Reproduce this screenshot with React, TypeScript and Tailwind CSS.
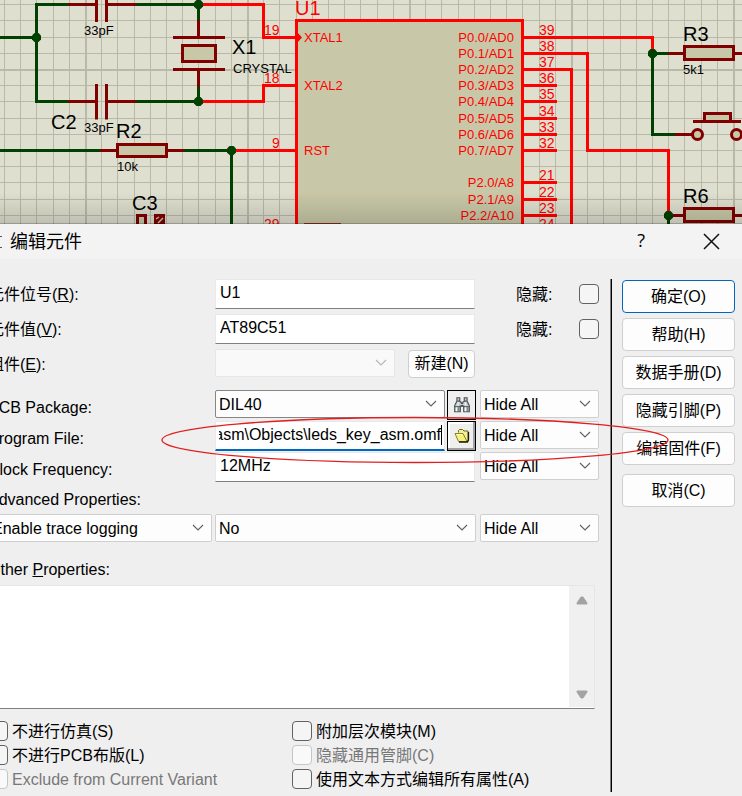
import type { ReactNode } from "react";

const GREEN = "#004000";
const MAROON = "#800000";
const RED = "#ff0000";
const FILL = "#c8c8a8";

const gridX = Array.from({ length: 124 }, (_, k) => ({ at: Math.round(4 + 16.2 * k), bold: k % 10 === 5 }));
const gridY = [4, 20, 37, 53, 69, 85, 101, 118, 134, 150, 166, 182, 199, 215];

function Wire({ d, color = RED }: { d: string; color?: string }) {
  return <path d={d} stroke={color} strokeWidth="3" fill="none" />;
}

function Dot({ x, y }: { x: number; y: number }) {
  return <path d={`M${x - 2} ${y - 4.5}h4l2.5 2.5v4l-2.5 2.5h-4l-2.5 -2.5v-4z`} fill={GREEN} />;
}

function Box({ x, y, w, h }: { x: number; y: number; w: number; h: number }) {
  return (
    <rect x={x + 1.5} y={y + 1.5} width={w - 3} height={h - 3} fill={FILL} stroke={MAROON} strokeWidth="3" />
  );
}

const portPins: [string, string, number][] = [
  ["P0.0/AD0", "39", 37],
  ["P0.1/AD1", "38", 53],
  ["P0.2/AD2", "37", 69],
  ["P0.3/AD3", "36", 85],
  ["P0.4/AD4", "35", 101],
  ["P0.5/AD5", "34", 118],
  ["P0.6/AD6", "33", 134],
  ["P0.7/AD7", "32", 150],
  ["P2.0/A8", "21", 182],
  ["P2.1/A9", "22", 199],
  ["P2.2/A10", "23", 215],
];

function Schematic() {
  return (
    <svg className="block h-[224px] w-full bg-[#dfdfcf]" role="img" aria-label="Schematic">
      <defs>
        <linearGradient id="shade" x1="0" y1="0" x2="0" y2="1">
          <stop offset="0" stopColor="#000" stopOpacity="0" />
          <stop offset="1" stopColor="#000" stopOpacity="0.14" />
        </linearGradient>
      </defs>
      <g fill="#b9b9aa">
        {gridX.map((g) => (
          <rect key={g.at} x={g.at} y="0" width={g.bold ? 2 : 1} height="224" />
        ))}
        {gridY.map((y) => (
          <rect key={y} x="0" y={y} width="2000" height={y === 69 ? 2 : 1} />
        ))}
      </g>

      <rect x="296.5" y="20.5" width="226" height="230" fill={FILL} stroke={RED} strokeWidth="3" />

      <Wire color={GREEN} d="M0 37.5H36.5M68 4.5H36.5V101.5H68M136 4.5H198.5V20M136 101.5H198.5V87M0 150.5H100M184 150.5H231.5V224" />
      <Wire color={MAROON} d="M68 4.5H96.5M106.5 4.5H136M96.5 0V22M106.5 0V22M68 101.5H96.5M106.5 101.5H136M96.5 84V119.5M106.5 84V119.5" />
      <Wire color={MAROON} d="M198.5 20V37.5M173 37.5H225M173 69.5H225M198.5 69.5V87M100 150.5H117M168 150.5H184" />
      <Box x={181} y={44} w={36} h={19} />
      <Box x={116} y={143} w={52} h={15} />
      <Box x={136} y={214} w={11} h={20} />
      <rect x="154" y="214" width="11" height="12" fill={MAROON} />
      <path d="M156 219l3 -2M158 223l5 -5" stroke={FILL} strokeWidth="1.5" />

      <Wire d="M199 4.5H263.5V37.5H297M199 101.5H263.5V85.5H297M232 150.5H297" />
      <path d="M297 32l5 5.500l-5 5.500z" fill={RED} />
      <Wire d="M524 37.5H652.5V53M524 53.5H587.5V150.5H668.5V215M524 69.5H571.5V224" />
      <Wire d="M524 85.5H557M524 101.5H557M524 118.5H557M524 134.5H557M524 150.5H557M524 182.5H557M524 199.5H557M524 215.5H557" />

      <Wire color={GREEN} d="M668 53.5H652.5V134.5H675M668.5 215V224" />
      <Wire color={MAROON} d="M668 53.5H684M735 53.5H2000M675 134.5H692M693 121.5H741M673 215.5H684M735 215.5H2000" />
      <Box x={683} y={45} w={52} h={16} />
      <Box x={683} y={207} w={52} h={16} />
      <Box x={703} y={112} w={29} h={11} />
      <circle cx="697.5" cy="134.5" r="5" fill={FILL} stroke={MAROON} strokeWidth="3" />
      <circle cx="736.5" cy="134.5" r="5" fill={FILL} stroke={MAROON} strokeWidth="3" />

      <Dot x={36.5} y={37.5} />
      <Dot x={198.5} y={4.5} />
      <Dot x={198.5} y={101.5} />
      <Dot x={231.5} y={150.5} />
      <Dot x={652.5} y={53.5} />
      <Dot x={668.5} y={215.5} />

      <g className="text-[20px]">
        <text x="51" y="129">C2</text>
        <text x="116" y="138">R2</text>
        <text x="132" y="210">C3</text>
        <text x="232" y="54">X1</text>
        <text x="683" y="41">R3</text>
        <text x="683" y="203">R6</text>
        <text x="295" y="15" fill={RED}>U1</text>
      </g>
      <g className="text-[13px]">
        <text x="84" y="35">33pF</text>
        <text x="84" y="132">33pF</text>
        <text x="117" y="171">10k</text>
        <text x="233" y="73">CRYSTAL</text>
        <text x="683" y="74">5k1</text>
      </g>
      <g className="text-[13px]" fill={RED}>
        <text x="304" y="42">XTAL1</text>
        <text x="304" y="90">XTAL2</text>
        <text x="304" y="155">RST</text>
        {portPins.map(([name, , y]) => (
          <text key={name} x="514" y={y + 5} textAnchor="end">{name}</text>
        ))}
      </g>
      <g className="text-[14px]" fill={RED}>
        <text x="264" y="35">19</text>
        <text x="264" y="83">18</text>
        <text x="272" y="148">9</text>
        <text x="264" y="229">29</text>
        <text x="539" y="229">24</text>
        {portPins.map(([, no, y]) => (
          <text key={no} x="539" y={y - 2}>{no}</text>
        ))}
      </g>
      <rect x="304" y="223" width="37" height="1" fill="#a03020" />
      <rect x="0" y="192" width="100%" height="32" fill="url(#shade)" />
      <rect x="0" y="223" width="100%" height="1" fill="#000" opacity="0.2" />
    </svg>
  );
}

function Chevron({ className }: { className: string }) {
  return (
    <svg viewBox="0 0 12 8" className={`pointer-events-none absolute right-2 top-1/2 -mt-1 h-2 w-3 ${className}`} aria-hidden="true">
      <path d="M1 1l5 5l5 -5" fill="none" stroke="currentColor" strokeWidth="1.100" />
    </svg>
  );
}

function Combo({ label, value, className = "", pad = "pl-[3px]", strong = false, disabled = false }: {
  label: string; value: string; className?: string; pad?: string; strong?: boolean; disabled?: boolean;
}) {
  const look = disabled
    ? "border-[#e6e6e6] bg-[#f9f9f9]"
    : strong
      ? "border-[#868686] bg-[#fdfdfd]"
      : "border-[#cfcfcf] bg-[#fdfdfd]";
  return (
    <div className={`relative h-7 ${className}`}>
      <select aria-label={label} disabled={disabled} className={`block h-7 w-full appearance-none rounded-[2px] border pt-[2px] text-[16px] text-black outline-none ${pad} ${look}`}>
        <option>{value}</option>
      </select>
      <Chevron className={disabled ? "text-[#b5b5b5]" : "text-[#606060]"} />
    </div>
  );
}

const fieldClass =
  "block w-full border border-[#e8e8e8] border-b-[#808080] bg-white px-1 pb-[2px] text-[16px] outline-none";

function Row({ label, htmlFor, low = false, children, side }: {
  label: ReactNode; htmlFor?: string; low?: boolean; children: ReactNode; side?: ReactNode;
}) {
  return (
    <div className="grid grid-cols-[222px_minmax(0,1fr)_119px] gap-x-[5px]">
      <label htmlFor={htmlFor} className={`leading-6 ${low ? "pt-[6px]" : "pt-1"}`}>{label}</label>
      {children}
      {side}
    </div>
  );
}

function HideTick({ id }: { id: string }) {
  return (
    <div className="flex items-center justify-between pl-9">
      <label htmlFor={id} className="pt-[2px]">隐藏:</label>
      <TickBox id={id} />
    </div>
  );
}

function TickBox({ id, disabled = false }: { id: string; disabled?: boolean }) {
  return (
    <input
      id={id}
      type="checkbox"
      disabled={disabled}
      className="block size-5 shrink-0 appearance-none rounded-[4px] border border-[#626262] bg-[#f5f5f5] disabled:border-[#c6c6c6] disabled:bg-[#f9f9f9]"
    />
  );
}

function Tick({ id, label, disabled = false }: { id: string; label: string; disabled?: boolean }) {
  return (
    <div className="flex h-5 items-center gap-1">
      <TickBox id={id} disabled={disabled} />
      <label htmlFor={id} className={`pt-[2px] leading-5 whitespace-nowrap ${disabled ? "text-[#787878]" : ""}`}>{label}</label>
    </div>
  );
}

const actionClass =
  "h-[33px] w-full rounded-[4px] border bg-[#fdfdfd] text-[16px] leading-none";

function BinocularsIcon() {
  return (
    <svg viewBox="0 0 16 16" className="size-[18px]" aria-hidden="true">
      <path d="M3.500 1.500h2.500v3l1 1h2l1 -1v-3h2.500v3l2 4v5.500h-5v-5h-3v5h-5v-5.500l2 -4z" fill="#c4ced2" stroke="#4a4f52" />
      <path d="M1.500 9.500h5M9.500 9.500h5M4 4.500h2M10 4.500h2" stroke="#4a4f52" />
      <path d="M7 6.500h2M7 8.500h2" stroke="#4a4f52" />
      <path d="M3 10v3.500M11 10v3.500M4.500 5.500v3M11 5.500v3" stroke="#f4f8fa" />
      <path d="M5 10v3.500M13 10v3.500" stroke="#7a8589" strokeWidth="1.500" />
    </svg>
  );
}

function FolderIcon() {
  return (
    <svg viewBox="0 0 16 14" className="h-[14px] w-4" aria-hidden="true">
      <path d="M4.500 3.500v-2l1 -1h3l1.500 1.500h4v8.500l-1.500 2" fill="#f4ee9a" stroke="#6b6414" />
      <path d="M1 4.500h8l4 8h-8.500z" fill="#f7f07a" stroke="#8b8320" />
      <path d="M2.500 5.500h6" stroke="#fffde0" />
      <path d="M5 13h8.500l1 -2v-8" fill="none" stroke="#1e1c04" strokeWidth="1.300" />
    </svg>
  );
}

export default function App() {
  return (
    <div className="relative min-h-screen overflow-hidden bg-[#efefef] font-['Liberation_Sans','Noto_Sans_CJK_SC',sans-serif] text-[16px] text-black">
      <Schematic />
      <section aria-label="编辑元件" className="relative -ml-3">
        <header className="flex h-[35px] items-center bg-[#f3f3f3] pr-[22px]">
          <span className="mr-2 h-3 w-[14px] border-y border-r-0 border-[#555]" />
          <h1 className="flex-1 text-[18px] leading-6">编辑元件</h1>
          <button type="button" aria-label="Help" className="mr-[58px] pb-1 font-['Open_Sans',sans-serif] text-[18px] leading-6">?</button>
          <button type="button" aria-label="Close">
            <svg viewBox="0 0 17 17" className="block size-[17px]" aria-hidden="true">
              <path d="M1 1l15 15M16 1l-15 15" stroke="#111" strokeWidth="1.500" />
            </svg>
          </button>
        </header>

        <div className="flex pt-5 pb-1 pr-[7px]">
          <form className="min-w-0 flex-1 pb-[3px]">
            <div className="flex flex-col gap-[5px]">
              <Row htmlFor="ref" label={<>元件位号(<u>R</u>):</>} side={<HideTick id="hide-ref" />}>
                <input id="ref" defaultValue="U1" className={`h-[30px] ${fieldClass}`} />
              </Row>
              <Row htmlFor="val" label={<>元件值(<u>V</u>):</>} side={<HideTick id="hide-val" />}>
                <input id="val" defaultValue="AT89C51" className={`h-[30px] ${fieldClass}`} />
              </Row>
              <Row label={<>组件(<u>E</u>):</>}>
                <div className="flex justify-between gap-[13px]">
                  <Combo label="组件" value="" disabled className="flex-1" />
                  <button type="button" className="mt-px h-7 w-[67px] rounded-[4px] border border-[#cfcfcf] bg-[#fdfdfd] leading-none">新建(N)</button>
                </div>
              </Row>
            </div>

            <div className="mt-3 flex flex-col gap-px">
              <Row low label="PCB Package:" side={<Combo label="PCB Package visibility" value="Hide All" />}>
                <div className="-mr-px flex gap-[2px]">
                  <Combo label="PCB Package" value="DIL40" strong className="flex-1" />
                  <button type="button" aria-label="Browse packages" className="flex h-[30px] w-[29px] items-center justify-center border border-black bg-[#efefef]">
                    <BinocularsIcon />
                  </button>
                </div>
              </Row>
              <Row low htmlFor="program" label="Program File:" side={<Combo label="Program File visibility" value="Hide All" />}>
                <div className="-mr-px flex gap-[2px]">
                  <div className="relative min-w-0 flex-1">
                    <input id="program" dir="rtl" defaultValue="asm\Objects\leds_key_asm.omf" className="block h-[30px] w-full border border-[#e8e8e8] border-b-2 border-b-[#0067c0] bg-white px-[3px] pb-[2px] text-[16px] outline-none" />
                    <span className="absolute top-1 right-[3px] h-5 w-px bg-black" />
                  </div>
                  <button type="button" aria-label="Open file" className="flex h-[30px] w-[29px] items-center justify-center border border-black bg-[#efefef] shadow-[inset_-2px_-2px_0_#a0a0a0,inset_2px_2px_0_#ffffff]">
                    <FolderIcon />
                  </button>
                </div>
              </Row>
              <Row low htmlFor="clock" label="Clock Frequency:" side={<Combo label="Clock Frequency visibility" value="Hide All" />}>
                <input id="clock" defaultValue="12MHz" className={`h-[30px] ${fieldClass}`} />
              </Row>
            </div>

            <p className="mt-[6px] leading-6">Advanced Properties:</p>
            <div className="mt-[2px] grid grid-cols-[224px_minmax(0,1fr)_119px]">
              <Combo label="Advanced property" value="Enable trace logging" pad="pl-[3px]" />
              <Combo label="Advanced value" value="No" className="mr-1 ml-[3px]" />
              <Combo label="Advanced visibility" value="Hide All" />
            </div>

            <label htmlFor="other" className="mt-4 block leading-6">Other <u>P</u>roperties:</label>
            <div className="mt-[3px] mr-1 flex h-[124px] border border-[#e6e6e6] border-b-[#808080] bg-white">
              <textarea id="other" className="block min-w-0 flex-1 resize-none bg-white outline-none" />
              <div className="mb-px flex w-[25px] flex-col items-center justify-between bg-[#f0f0f0] pt-[10px] pb-2">
                <svg viewBox="0 0 12 9" className="h-[9px] w-3" aria-hidden="true">
                  <path d="M5 1h2l4 6v1h-10v-1z" fill="#a3a3a3" stroke="#a3a3a3" strokeLinejoin="round" />
                </svg>
                <svg viewBox="0 0 12 9" className="h-[9px] w-3" aria-hidden="true">
                  <path d="M5 8h2l4 -6v-1h-10v1z" fill="#a3a3a3" stroke="#a3a3a3" strokeLinejoin="round" />
                </svg>
              </div>
            </div>

            <div className="mt-3 grid grid-cols-[304px_minmax(0,1fr)] gap-y-1">
              <Tick id="no-sim" label="不进行仿真(S)" />
              <Tick id="attach" label="附加层次模块(M)" />
              <Tick id="no-pcb" label="不进行PCB布版(L)" />
              <Tick id="hide-common" label="隐藏通用管脚(C)" disabled />
              <Tick id="exclude" label="Exclude from Current Variant" disabled />
              <Tick id="as-text" label="使用文本方式编辑所有属性(A)" />
            </div>
          </form>

          <div className="ml-[11px] w-[2px] border-l border-[#808080] bg-black" />

          <div className="ml-[10px] flex w-[113px] flex-col gap-[5px] pt-px">
            <button type="button" className={`border-[#0067c0] ${actionClass}`}>确定(O)</button>
            <button type="button" className={`border-[#cfcfcf] ${actionClass}`}>帮助(H)</button>
            <button type="button" className={`border-[#cfcfcf] ${actionClass}`}>数据手册(D)</button>
            <button type="button" className={`border-[#cfcfcf] ${actionClass}`}>隐藏引脚(P)</button>
            <button type="button" className={`border-[#cfcfcf] ${actionClass}`}>编辑固件(F)</button>
            <button type="button" className={`mt-1 border-[#cfcfcf] ${actionClass}`}>取消(C)</button>
          </div>
        </div>

        <svg viewBox="0 0 508 48" className="pointer-events-none absolute top-[192px] left-[173px] h-12 w-[508px]" aria-hidden="true">
          <ellipse cx="254" cy="24" rx="253" ry="22.500" fill="none" stroke="#e02020" strokeWidth="1.300" />
        </svg>
      </section>
    </div>
  );
}
